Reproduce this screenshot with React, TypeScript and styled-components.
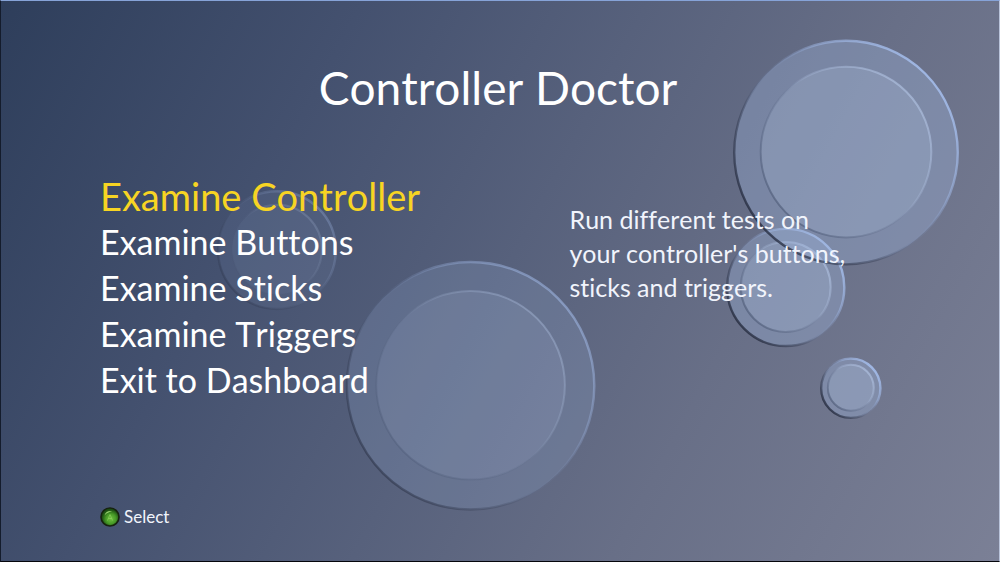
import React, { useState } from "react";
import styled, { createGlobalStyle } from "styled-components";

const GlobalStyle = createGlobalStyle`
  * { box-sizing: border-box; }
  html, body { margin: 0; padding: 0; background: #000; }
  body {
    font-family: Lato, Calibri, sans-serif;
    font-variant-ligatures: none;
    font-kerning: none;
    color: #fff;
  }
`;

const Screen = styled.main`
  position: relative;
  isolation: isolate;
  display: flex;
  flex-direction: column;
  min-height: 100vh;
  overflow: hidden;
  border-style: solid;
  border-width: 1px;
  border-color: #86a3d8 #b9c3da #05060c #141c2c;
  background: linear-gradient(118deg, #2e3e5b 0%, #44516f 28%, #57617c 50%, #686f87 70%, #7b8096 100%);
`;

const Backdrop = styled.svg`
  position: absolute;
  inset: 0;
  z-index: -1;
  width: 100%;
  height: 100%;
`;

const Title = styled.h1`
  margin: 0;
  padding: 59px 4px 0 0;
  font-size: 46px;
  line-height: 56px;
  font-weight: 400;
  text-align: center;
`;

const Content = styled.div`
  display: grid;
  grid-template-columns: 47fr 43fr;
  padding: 57px 0 0 99px;
`;

const Menu = styled.ul`
  margin: 0;
  padding: 0;
  list-style: none;
`;

const MenuButton = styled.button<{ $active: boolean }>`
  display: block;
  padding: 0;
  border: 0;
  outline: 0;
  background: none;
  font: inherit;
  font-size: ${(p) => (p.$active ? 38 : 34)}px;
  font-kerning: inherit;
  font-variant-ligatures: inherit;
  line-height: 46px;
  color: ${(p) => (p.$active ? "#f7d423" : "#fff")};
  cursor: pointer;
  white-space: nowrap;
`;

const Description = styled.p`
  max-width: 320px;
  margin: 0;
  padding-top: 29px;
  font-size: 25px;
  line-height: 34px;
  color: #f1f4fc;
`;

const Footer = styled.footer`
  margin-top: auto;
  padding: 0 0 32px 99px;
`;

const SelectButton = styled.button`
  display: flex;
  align-items: center;
  gap: 4px;
  padding: 0;
  border: 0;
  background: none;
  font: inherit;
  font-size: 17px;
  line-height: 24px;
  color: #f1f4fc;
  cursor: pointer;
`;

interface DiscProps {
  x: number;
  y: number;
  outer: number;
  inner: number;
  strength: number;
  rim: number;
}

const discs: DiscProps[] = [
  { x: 276.5, y: 250, outer: 59, inner: 45, strength: 0.09, rim: 0.3 },
  { x: 470.5, y: 386, outer: 124, inner: 94.5, strength: 0.2, rim: 0.55 },
  { x: 786.3, y: 287.5, outer: 58.7, inner: 45, strength: 0.36, rim: 0.9 },
  { x: 851.5, y: 388.5, outer: 29.7, inner: 23, strength: 0.36, rim: 0.9 },
  { x: 846.7, y: 152.3, outer: 112, inner: 85.5, strength: 0.36, rim: 0.9 },
];

const Disc = ({ x, y, outer, inner, strength, rim }: DiscProps) => (
  <g>
    <circle cx={x} cy={y} r={outer} fill="#9db4dc" fillOpacity={strength} />
    <circle cx={x} cy={y} r={outer} fill="none" stroke="url(#rim)" strokeWidth="2.4" opacity={rim} />
    <circle cx={x} cy={y - 0.5} r={inner} fill="#b4c8e4" fillOpacity={strength * 0.6} />
    <circle cx={x} cy={y - 0.5} r={inner} fill="none" stroke="url(#innerRim)" strokeWidth="2" opacity={rim} />
  </g>
);

const items = [
  { label: "Examine Controller", lines: ["Run different tests on", "your controller's buttons,", "sticks and triggers."] },
  { label: "Examine Buttons", lines: ["Test each button."] },
  { label: "Examine Sticks", lines: ["Test both sticks."] },
  { label: "Examine Triggers", lines: ["Test both triggers."] },
  { label: "Exit to Dashboard", lines: ["Return to the dashboard."] },
];

export default function App() {
  const [active, setActive] = useState(0);
  return (
    <>
      <GlobalStyle />
      <Screen>
        <Backdrop viewBox="0 0 1000 562" preserveAspectRatio="xMidYMid slice" aria-hidden="true">
          <defs>
            <linearGradient id="rim" x1="0.9" y1="0.15" x2="0.1" y2="0.85">
              <stop offset="0" stopColor="#a6bfee" stopOpacity="1" />
              <stop offset="0.3" stopColor="#a0b8e6" stopOpacity="0.55" />
              <stop offset="0.5" stopColor="#8095c0" stopOpacity="0.1" />
              <stop offset="0.7" stopColor="#2c344a" stopOpacity="0.4" />
              <stop offset="1" stopColor="#1d2335" stopOpacity="0.85" />
            </linearGradient>
            <linearGradient id="innerRim" x1="0.9" y1="0.15" x2="0.1" y2="0.85">
              <stop offset="0" stopColor="#b4c6e6" stopOpacity="0.7" />
              <stop offset="0.4" stopColor="#b4c6e6" stopOpacity="0.25" />
              <stop offset="0.55" stopColor="#54617f" stopOpacity="0.15" />
              <stop offset="1" stopColor="#46536f" stopOpacity="0.65" />
            </linearGradient>
          </defs>
          {discs.map((d) => (
            <Disc key={`${d.x}-${d.y}`} {...d} />
          ))}
        </Backdrop>
        <Title>Controller Doctor</Title>
        <Content>
          <Menu>
            {items.map((item, i) => (
              <li key={item.label}>
                <MenuButton $active={i === active} onClick={() => setActive(i)} onFocus={() => setActive(i)}>
                  {item.label}
                </MenuButton>
              </li>
            ))}
          </Menu>
          <Description>
            {items[active].lines.map((line, i) => (
              <React.Fragment key={line}>
                {i > 0 && <br />}
                {line}
              </React.Fragment>
            ))}
          </Description>
        </Content>
        <Footer>
          <SelectButton>
            <svg width="20" height="20" viewBox="0 0 20 20" aria-hidden="true">
              <defs>
                <radialGradient id="orb" cx="0.55" cy="0.6" r="0.5">
                  <stop offset="0" stopColor="#6fbf3f" />
                  <stop offset="0.55" stopColor="#479a27" />
                  <stop offset="1" stopColor="#1c4f12" />
                </radialGradient>
              </defs>
              <circle cx="10" cy="10" r="9" fill="url(#orb)" stroke="#17230f" strokeWidth="1.6" />
              <path d="M4.5 8.5C5.5 4.8 9 3.4 12 4.3C9.5 5 6.5 6 4.5 8.5Z" fill="#a9e07e" opacity="0.85" />
              <path d="M7.5 13.5L10 7.5L12.6 13.5M8.4 11.5H11.7" fill="none" stroke="#93d864" strokeWidth="1" opacity="0.6" />
            </svg>
            Select
          </SelectButton>
        </Footer>
      </Screen>
    </>
  );
}
